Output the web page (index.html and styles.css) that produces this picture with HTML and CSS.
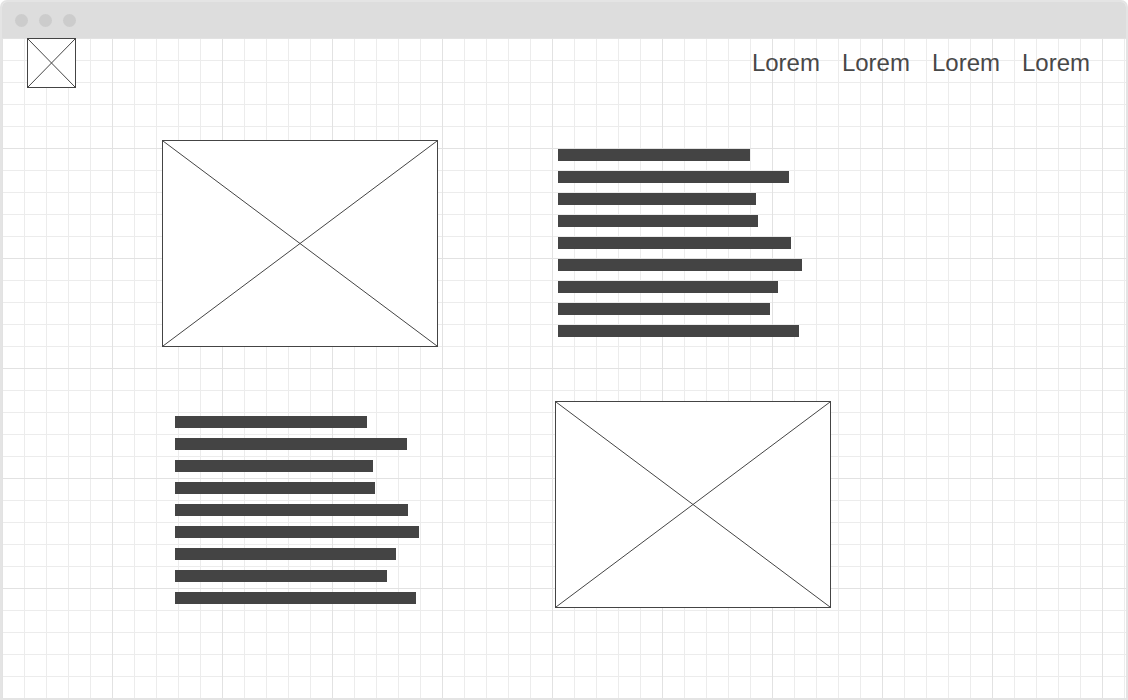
FILE: index.html
```html
<!DOCTYPE html>
<html lang="en">
<head>
    <meta charset="UTF-8">
    <title>Wireframe</title>
    <link rel="stylesheet" href="styles.css">
</head>
<body>
    <div class="window">
        <div class="titlebar">
            <span class="dot"></span>
            <span class="dot"></span>
            <span class="dot"></span>
        </div>

        <div class="canvas">
            <header class="topbar">
                <div class="placeholder logo">
                    <svg viewBox="0 0 100 100" preserveAspectRatio="none">
                        <line x1="0" y1="0" x2="100" y2="100" vector-effect="non-scaling-stroke"/>
                        <line x1="100" y1="0" x2="0" y2="100" vector-effect="non-scaling-stroke"/>
                    </svg>
                </div>
                <nav class="menu">
                    <a href="#">Lorem</a>
                    <a href="#">Lorem</a>
                    <a href="#">Lorem</a>
                    <a href="#">Lorem</a>
                </nav>
            </header>

            <main class="blocks">
                <div class="row">
                    <div class="placeholder picture">
                        <svg viewBox="0 0 100 100" preserveAspectRatio="none">
                            <line x1="0" y1="0" x2="100" y2="100" vector-effect="non-scaling-stroke"/>
                            <line x1="100" y1="0" x2="0" y2="100" vector-effect="non-scaling-stroke"/>
                        </svg>
                    </div>
                    <div class="lines lines-right">
                        <span class="bar" style="width:192px"></span>
                        <span class="bar" style="width:231px"></span>
                        <span class="bar" style="width:198px"></span>
                        <span class="bar" style="width:200px"></span>
                        <span class="bar" style="width:233px"></span>
                        <span class="bar" style="width:244px"></span>
                        <span class="bar" style="width:220px"></span>
                        <span class="bar" style="width:212px"></span>
                        <span class="bar" style="width:241px"></span>
                    </div>
                </div>

                <div class="row">
                    <div class="lines lines-left">
                        <span class="bar" style="width:192px"></span>
                        <span class="bar" style="width:232px"></span>
                        <span class="bar" style="width:198px"></span>
                        <span class="bar" style="width:200px"></span>
                        <span class="bar" style="width:233px"></span>
                        <span class="bar" style="width:244px"></span>
                        <span class="bar" style="width:221px"></span>
                        <span class="bar" style="width:212px"></span>
                        <span class="bar" style="width:241px"></span>
                    </div>
                    <div class="placeholder picture">
                        <svg viewBox="0 0 100 100" preserveAspectRatio="none">
                            <line x1="0" y1="0" x2="100" y2="100" vector-effect="non-scaling-stroke"/>
                            <line x1="100" y1="0" x2="0" y2="100" vector-effect="non-scaling-stroke"/>
                        </svg>
                    </div>
                </div>
            </main>
        </div>
    </div>
</body>
</html>
```

FILE: styles.css
```css
* {
    box-sizing: border-box;
}
body {
    margin: 0;
    font-family: "Liberation Sans", Arial, sans-serif;
    background: #ffffff;
}
.window {
    width: 1128px;
    height: 700px;
    border: 2px solid #e4e4e4;
    border-radius: 7px 7px 0 0;
    display: flex;
    flex-direction: column;
    overflow: hidden;
}
.titlebar {
    height: 36px;
    background: #dddddd;
    display: flex;
    align-items: center;
    gap: 11px;
    padding-left: 13px;
    flex-shrink: 0;
}
.dot {
    width: 13px;
    height: 13px;
    border-radius: 50%;
    background: #cccccc;
}
.canvas {
    flex: 1;
    background-color: #ffffff;
    background-image:
        linear-gradient(to right, #e2e2e2 1px, transparent 1px),
        linear-gradient(to bottom, #e2e2e2 1px, transparent 1px),
        linear-gradient(to right, #ececec 1px, transparent 1px),
        linear-gradient(to bottom, #ececec 1px, transparent 1px);
    background-size: 110px 110px, 110px 110px, 22px 22px, 22px 22px;
}
.topbar {
    display: flex;
    justify-content: space-between;
    align-items: flex-start;
    padding: 0 36px 0 25px;
}
.placeholder {
    background: #ffffff;
    border: 1px solid #444444;
}
.placeholder svg {
    display: block;
    width: 100%;
    height: 100%;
}
.placeholder line {
    stroke: #444444;
    stroke-width: 1;
}
.logo {
    width: 49px;
    height: 50px;
}
.menu {
    display: flex;
    gap: 22px;
    margin-top: 13px;
}
.menu a {
    color: #484848;
    text-decoration: none;
    font-size: 24px;
    line-height: 24px;
}
.blocks {
    margin-top: 52px;
    display: flex;
    flex-direction: column;
    gap: 54px;
}
.row {
    display: grid;
    grid-template-columns: 276px 276px;
    column-gap: 117px;
    padding-left: 160px;
    align-items: start;
}
.picture {
    width: 276px;
    height: 207px;
}
.lines {
    display: flex;
    flex-direction: column;
    gap: 10px;
}
.lines-right {
    margin: 9px 0 0 3px;
}
.lines-left {
    margin: 15px 0 0 13px;
}
.bar {
    display: block;
    height: 12px;
    background: #444444;
}
```
